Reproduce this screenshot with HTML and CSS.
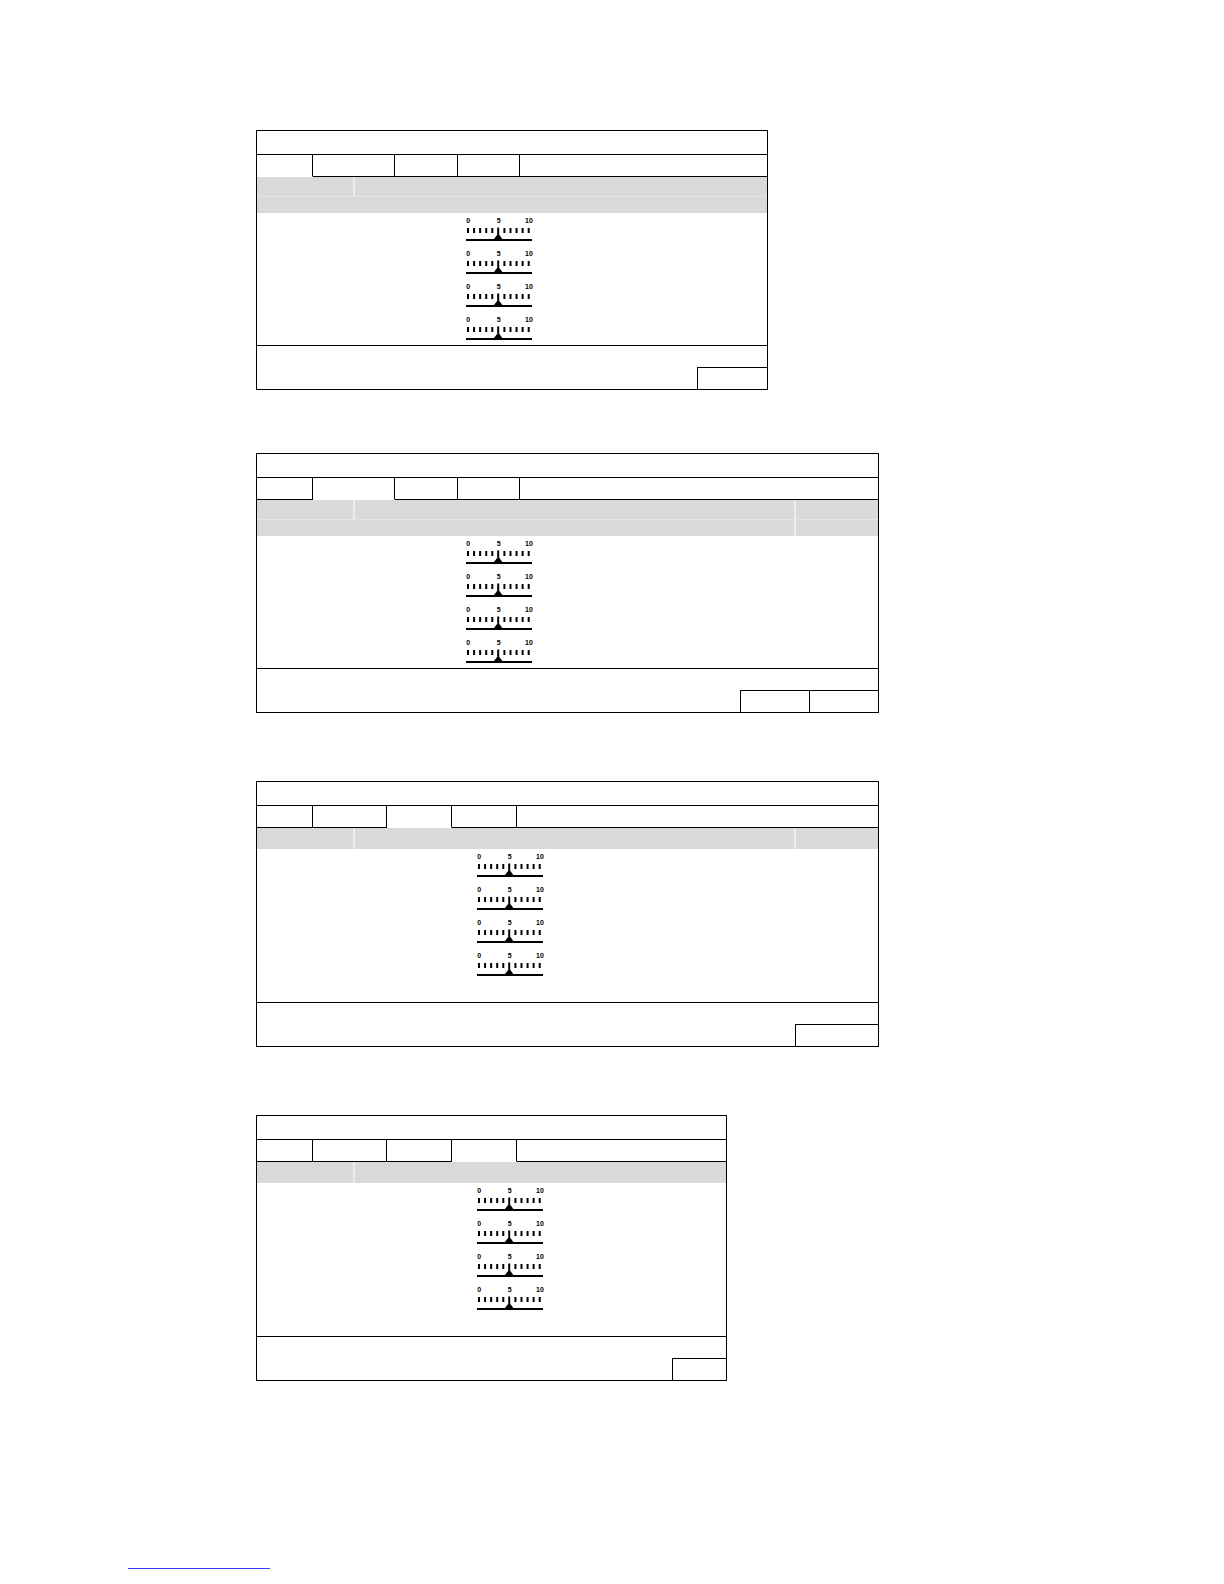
FILE: index.html
```html
<!DOCTYPE html>
<html>
<head>
<meta charset="utf-8">
<title>Settings panels</title>
<link rel="stylesheet" href="styles.css">
</head>
<body>
<svg class="defs" width="0" height="0" aria-hidden="true">
  <defs>
    <symbol id="sl" viewBox="0 0 68 33">
      <g class="nums" font-family="Liberation Sans, Arial, sans-serif" font-weight="700" font-size="7" text-anchor="middle" fill="#000">
        <text x="2.3" y="10">0</text>
        <text x="32.6" y="10">5</text>
        <text x="63" y="10">10</text>
      </g>
      <g fill="#000">
        <rect x="1" y="15" width="2" height="5"/>
        <rect x="7.07" y="15" width="2" height="5"/>
        <rect x="13.14" y="15" width="2" height="5"/>
        <rect x="19.21" y="15" width="2" height="5"/>
        <rect x="25.28" y="15" width="2" height="5"/>
        <rect x="31.2" y="14.5" width="2" height="7"/>
        <rect x="37.42" y="15" width="2" height="5"/>
        <rect x="43.49" y="15" width="2" height="5"/>
        <rect x="49.56" y="15" width="2" height="5"/>
        <rect x="55.63" y="15" width="2" height="5"/>
        <rect x="61.7" y="15" width="2" height="5"/>
        <polygon points="32.2,20.5 27.8,26.2 36.6,26.2"/>
        <rect x="0" y="26" width="66" height="2"/>
      </g>
    </symbol>
  </defs>
</svg>

<main class="page">

  <section class="panel p1">
    <div class="title"></div>
    <div class="tabs">
      <div class="tab a56 active"></div>
      <div class="tab a82"></div>
      <div class="tab a63"></div>
      <div class="tab a62"></div>
      <div class="tab fill"></div>
    </div>
    <div class="head">
      <div class="hrow r1"><div class="hc c1"></div><div class="hc grow last"></div></div>
      <div class="hrow r2"><div class="hc grow last"></div></div>
    </div>
    <div class="rows left-a">
      <div class="row"><svg class="slider" viewBox="0 0 68 33"><use href="#sl"/></svg></div>
      <div class="row"><svg class="slider" viewBox="0 0 68 33"><use href="#sl"/></svg></div>
      <div class="row"><svg class="slider" viewBox="0 0 68 33"><use href="#sl"/></svg></div>
      <div class="row"><svg class="slider" viewBox="0 0 68 33"><use href="#sl"/></svg></div>
    </div>
    <div class="foot">
      <div class="btn b70"></div>
    </div>
  </section>

  <section class="panel p2">
    <div class="title"></div>
    <div class="tabs">
      <div class="tab a56"></div>
      <div class="tab a82 active"></div>
      <div class="tab a63"></div>
      <div class="tab a62"></div>
      <div class="tab fill"></div>
    </div>
    <div class="head">
      <div class="hrow r1"><div class="hc c1"></div><div class="hc grow"></div><div class="hc c3"></div></div>
      <div class="hrow r2"><div class="hc grow"></div><div class="hc c3"></div></div>
    </div>
    <div class="rows left-a">
      <div class="row"><svg class="slider" viewBox="0 0 68 33"><use href="#sl"/></svg></div>
      <div class="row"><svg class="slider" viewBox="0 0 68 33"><use href="#sl"/></svg></div>
      <div class="row"><svg class="slider" viewBox="0 0 68 33"><use href="#sl"/></svg></div>
      <div class="row"><svg class="slider" viewBox="0 0 68 33"><use href="#sl"/></svg></div>
    </div>
    <div class="foot">
      <div class="btn b69"></div>
      <div class="btn b69"></div>
    </div>
  </section>

  <section class="panel p3">
    <div class="title"></div>
    <div class="tabs">
      <div class="tab a56"></div>
      <div class="tab a74"></div>
      <div class="tab a65 active"></div>
      <div class="tab a65"></div>
      <div class="tab fill"></div>
    </div>
    <div class="head">
      <div class="hrow single"><div class="hc c1"></div><div class="hc grow"></div><div class="hc c3"></div></div>
    </div>
    <div class="rows left-b tall">
      <div class="row"><svg class="slider" viewBox="0 0 68 33"><use href="#sl"/></svg></div>
      <div class="row"><svg class="slider" viewBox="0 0 68 33"><use href="#sl"/></svg></div>
      <div class="row"><svg class="slider" viewBox="0 0 68 33"><use href="#sl"/></svg></div>
      <div class="row"><svg class="slider" viewBox="0 0 68 33"><use href="#sl"/></svg></div>
    </div>
    <div class="foot">
      <div class="btn b83"></div>
    </div>
  </section>

  <section class="panel p4">
    <div class="title"></div>
    <div class="tabs">
      <div class="tab a56"></div>
      <div class="tab a74"></div>
      <div class="tab a65"></div>
      <div class="tab a65 active"></div>
      <div class="tab fill"></div>
    </div>
    <div class="head">
      <div class="hrow single"><div class="hc c1"></div><div class="hc grow last"></div></div>
    </div>
    <div class="rows left-b tall">
      <div class="row"><svg class="slider" viewBox="0 0 68 33"><use href="#sl"/></svg></div>
      <div class="row"><svg class="slider" viewBox="0 0 68 33"><use href="#sl"/></svg></div>
      <div class="row"><svg class="slider" viewBox="0 0 68 33"><use href="#sl"/></svg></div>
      <div class="row"><svg class="slider" viewBox="0 0 68 33"><use href="#sl"/></svg></div>
    </div>
    <div class="foot">
      <div class="btn b54"></div>
    </div>
  </section>

  <a class="note" href="#"></a>
</main>
</body>
</html>
```
FILE: styles.css
```css
* { box-sizing: border-box; }

html, body {
  margin: 0;
  padding: 0;
  background: #ffffff;
}

body {
  font-family: "Liberation Sans", Arial, sans-serif;
  color: #000;
}

.defs {
  position: absolute;
  width: 0;
  height: 0;
  overflow: hidden;
}

.page {
  padding-top: 130px;
  display: flex;
  flex-direction: column;
  align-items: flex-start;
}

/* panel frames */
.panel {
  margin-left: 256px;
  border: 1px solid #000;
  display: flex;
  flex-direction: column;
  background: #fff;
}
.p1 { width: 512px; }
.p2 { width: 623px; margin-top: 63px; }
.p3 { width: 623px; margin-top: 68px; }
.p4 { width: 471px; margin-top: 68px; }

.title {
  height: 24px;
  border-bottom: 1px solid #000;
}

/* tabs */
.tabs {
  display: flex;
  height: 22px;
}
.tab {
  height: 22px;
  border-right: 1px solid #000;
  border-bottom: 1px solid #000;
}
.tab.active { border-bottom-color: transparent; }
.tab.fill { flex: 1; border-right: 0; }
.a56 { width: 56px; }
.a62 { width: 62px; }
.a63 { width: 63px; }
.a65 { width: 65px; }
.a74 { width: 74px; }
.a82 { width: 82px; }

/* gray header band */
.head {
  background: #d9d9d9;
  display: flex;
  flex-direction: column;
}
.hrow { display: flex; }
.hrow.r1 { height: 20px; border-bottom: 1px solid #e4e4e4; }
.hrow.r2 { height: 16px; }
.hrow.single { height: 21px; }
.hc { border-right: 2px solid #ececec; }
.hc.last { border-right: 0; }
.hc.c1 { width: 98px; }
.hc.grow { flex: 1; }
.hc.c3 { width: 82px; border-right: 0; }
.hrow.r2 .hc.grow { border-right: 2px solid #ececec; }
.hrow.r2 .hc.grow.last { border-right: 0; }

/* slider rows */
.rows {
  display: flex;
  flex-direction: column;
}
.rows.left-a { padding-left: 209px; }
.rows.left-b { padding-left: 220px; }
.rows.tall { padding-bottom: 21px; }
.row {
  height: 33px;
  display: flex;
  align-items: flex-start;
}
.slider {
  width: 68px;
  height: 33px;
  display: block;
  overflow: visible;
}
.nums { -webkit-font-smoothing: antialiased; }

/* footer with button boxes */
.foot {
  height: 44px;
  border-top: 1px solid #000;
  display: flex;
  justify-content: flex-end;
  align-items: flex-end;
}
.btn {
  height: 22px;
  border-top: 1px solid #000;
  border-left: 1px solid #000;
}
.b54 { width: 54px; }
.b69 { width: 69px; }
.b70 { width: 70px; }
.b83 { width: 83px; }

/* link underline at the bottom of the page */
.note {
  display: block;
  margin-top: 187px;
  margin-left: 128px;
  width: 142px;
  height: 1px;
  background: #3a3af0;
}
```
